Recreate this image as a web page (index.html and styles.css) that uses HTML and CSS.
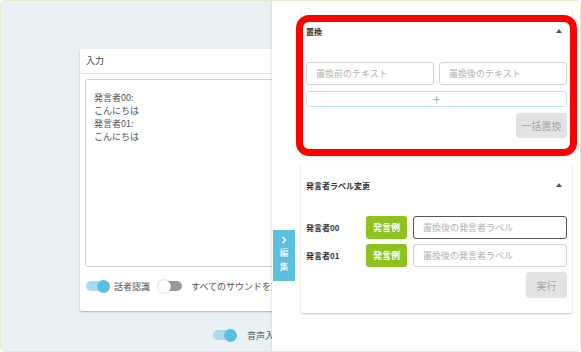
FILE: index.html
```html
<!DOCTYPE html>
<html lang="ja">

<head>
    <meta charset="UTF-8">
    <meta name="viewport" content="width=device-width, initial-scale=1.0">
    <title>文字起こし編集</title>
    <link rel="stylesheet" href="styles.css">
</head>

<body>
    <div class="frame">
        <main class="main">
            <section class="card">
                <header class="card-head">入力</header>
                <div class="card-body">
                    <div class="textarea">発言者00:<br>こんにちは<br>発言者01:<br>こんにちは</div>
                    <div class="switches">
                        <span class="toggle on"><span class="knob"></span></span>
                        <span class="switch-label">話者認識</span>
                        <span class="toggle off"><span class="knob"></span></span>
                        <span class="switch-label">すべてのサウンドを文字起こし</span>
                    </div>
                </div>
            </section>
            <div class="voice-row">
                <span class="toggle on"><span class="knob"></span></span>
                <span class="switch-label voice-label">音声入力</span>
            </div>
        </main>

        <aside class="drawer">
            <button class="drawer-tab">
                <svg width="6" height="8" viewBox="0 0 6 8"><polyline points="1.5,1 4.5,4 1.5,7" fill="none" stroke="#fff" stroke-width="1.4" /></svg>
                <span>編</span>
                <span>集</span>
            </button>

            <section class="panel panel-replace">
                <div class="highlight"></div>
                <header class="panel-head">
                    <span>置換</span>
                    <svg class="caret" width="6" height="4" viewBox="0 0 6 4"><polygon points="0,4 3,0 6,4" fill="#555" /></svg>
                </header>
                <div class="panel-body">
                    <div class="pair">
                        <input class="field" type="text" placeholder="置換前のテキスト">
                        <input class="field" type="text" placeholder="置換後のテキスト">
                    </div>
                    <button class="add-button">+</button>
                    <button class="flat-button replace-all">一括置換</button>
                </div>
            </section>

            <section class="panel">
                <header class="panel-head">
                    <span>発言者ラベル変更</span>
                    <svg class="caret" width="6" height="4" viewBox="0 0 6 4"><polygon points="0,4 3,0 6,4" fill="#555" /></svg>
                </header>
                <div class="panel-body">
                    <div class="speaker-row">
                        <span class="speaker-name">発言者00</span>
                        <button class="sample-button">発言例</button>
                        <input class="field focused" type="text" placeholder="置換後の発言者ラベル">
                    </div>
                    <div class="speaker-row">
                        <span class="speaker-name">発言者01</span>
                        <button class="sample-button">発言例</button>
                        <input class="field" type="text" placeholder="置換後の発言者ラベル">
                    </div>
                    <button class="flat-button run">実行</button>
                </div>
            </section>
        </aside>
    </div>
</body>

</html>
```

FILE: styles.css
```css
html,
input,
button {
    font-family: 'Noto Sans CJK JP', 'Noto Sans', sans-serif;
}

body {
    margin: 0;
    overflow: hidden;
}

.frame {
    position: relative;
    width: 581px;
    height: 352px;
    box-sizing: border-box;
    border: 1px solid #e3e9c9;
    border-radius: 6px;
    background: #eaf1f5;
    overflow: hidden;
}

.main {
    padding: 48px 0 0 79px;
}

.card {
    width: 421px;
    background: white;
    border-radius: 2px;
    box-shadow: 0 1px 2px rgba(0, 0, 0, .28);
}

.card-head {
    height: 24px;
    line-height: 24px;
    padding: 0 6px;
    font-size: 9px;
    color: #444;
    border-bottom: 1px solid #dedede;
}

.card-body {
    padding: 5px 5px 15px 5px;
}

.textarea {
    height: 188px;
    box-sizing: border-box;
    padding: 11px 8px;
    border: 1px solid #cfcfcf;
    border-radius: 3px;
    font-size: 9px;
    line-height: 13px;
    color: #555;
}

.switches {
    display: flex;
    align-items: center;
    height: 20px;
    margin-top: 9px;
    padding-left: 1px;
}

.toggle {
    display: flex;
    align-items: center;
    flex: none;
    width: 23px;
    height: 10px;
    border-radius: 5px;
}

.toggle.on {
    justify-content: flex-end;
    background: #a9dcec;
}

.toggle.off {
    background: #9a9a9a;
}

.knob {
    width: 13px;
    height: 13px;
    border-radius: 50%;
}

.toggle.on .knob {
    background: #5bc0de;
    margin-right: -1px;
}

.toggle.off .knob {
    background: white;
    margin-left: -1px;
    box-shadow: 0 0 2px rgba(0, 0, 0, .35);
}

.switch-label {
    font-size: 9px;
    color: #555;
    margin: 0 9px 0 5px;
    white-space: nowrap;
}

.switches .toggle.off + .switch-label {
    margin-left: 9px;
}

.voice-row {
    display: flex;
    align-items: center;
    height: 14px;
    margin-top: 17px;
    padding-left: 133px;
}

.voice-label {
    margin-left: 11px;
}

.drawer {
    position: absolute;
    top: 0;
    left: 271px;
    right: 0;
    bottom: 0;
    padding: 8px 8px 0 29px;
    background: white;
    box-shadow: -1px 0 2px rgba(0, 0, 0, .1);
}

.drawer-tab {
    position: absolute;
    left: 1px;
    top: 229px;
    width: 22px;
    height: 51px;
    margin: 0;
    padding: 6px 0 0 0;
    border: 0;
    background: #5bc0de;
    color: white;
    font-size: 9px;
    line-height: 14px;
    display: flex;
    flex-direction: column;
    align-items: center;
}

.drawer-tab svg {
    margin-bottom: 2px;
}

.panel {
    position: relative;
    background: white;
    border-radius: 2px;
    box-shadow: 0 1px 2px rgba(0, 0, 0, .22), 0 0 1px rgba(0, 0, 0, .08);
    margin-bottom: 10px;
}

.highlight {
    position: absolute;
    top: 6px;
    left: -5px;
    right: -5px;
    bottom: -3px;
    border: 7px solid #ff0000;
    border-radius: 13px;
}

.panel-head {
    height: 44px;
    padding: 0 10px 0 5px;
    display: flex;
    justify-content: space-between;
    align-items: center;
    font-size: 8px;
    font-weight: 700;
    color: #333;
}

.panel-body {
    padding: 9px 5px 15px 5px;
    display: flex;
    flex-direction: column;
    gap: 6px;
}

.pair {
    display: grid;
    grid-template-columns: 1fr 1fr;
    gap: 5px;
}

.field {
    height: 23px;
    box-sizing: border-box;
    margin: 0;
    padding: 0 9px;
    border: 1px solid #d2d2d2;
    border-radius: 3px;
    font-size: 9px;
    color: #555;
    min-width: 0;
}

.field::placeholder {
    color: #b3b3b3;
}

.field.focused {
    border-color: #555;
}

.add-button {
    height: 16px;
    margin: 0;
    padding: 0;
    border: 1px solid #bfe5f1;
    border-radius: 3px;
    background: white;
    color: #5bc0de;
    font-size: 12px;
    line-height: 12px;
}

.flat-button {
    align-self: flex-end;
    margin: 0;
    padding: 0;
    border: 0;
    border-radius: 3px;
    background: #e3e3e3;
    color: #a5a5a5;
    font-size: 10px;
}

.replace-all {
    width: 51px;
    height: 25px;
}

.panel-body:has(.speaker-row) {
    gap: 5px;
}

.speaker-row {
    display: grid;
    grid-template-columns: 60px 41px 1fr;
    align-items: center;
}

.speaker-name {
    font-size: 8px;
    font-weight: 700;
    color: #333;
}

.sample-button {
    height: 23px;
    margin: 0;
    padding: 0;
    border: 0;
    border-radius: 3px;
    background: #8fc21f;
    color: white;
    font-size: 9px;
    font-weight: 700;
}

.speaker-row .field {
    margin-left: 6px;
}

.run {
    width: 41px;
    height: 26px;
}
```
